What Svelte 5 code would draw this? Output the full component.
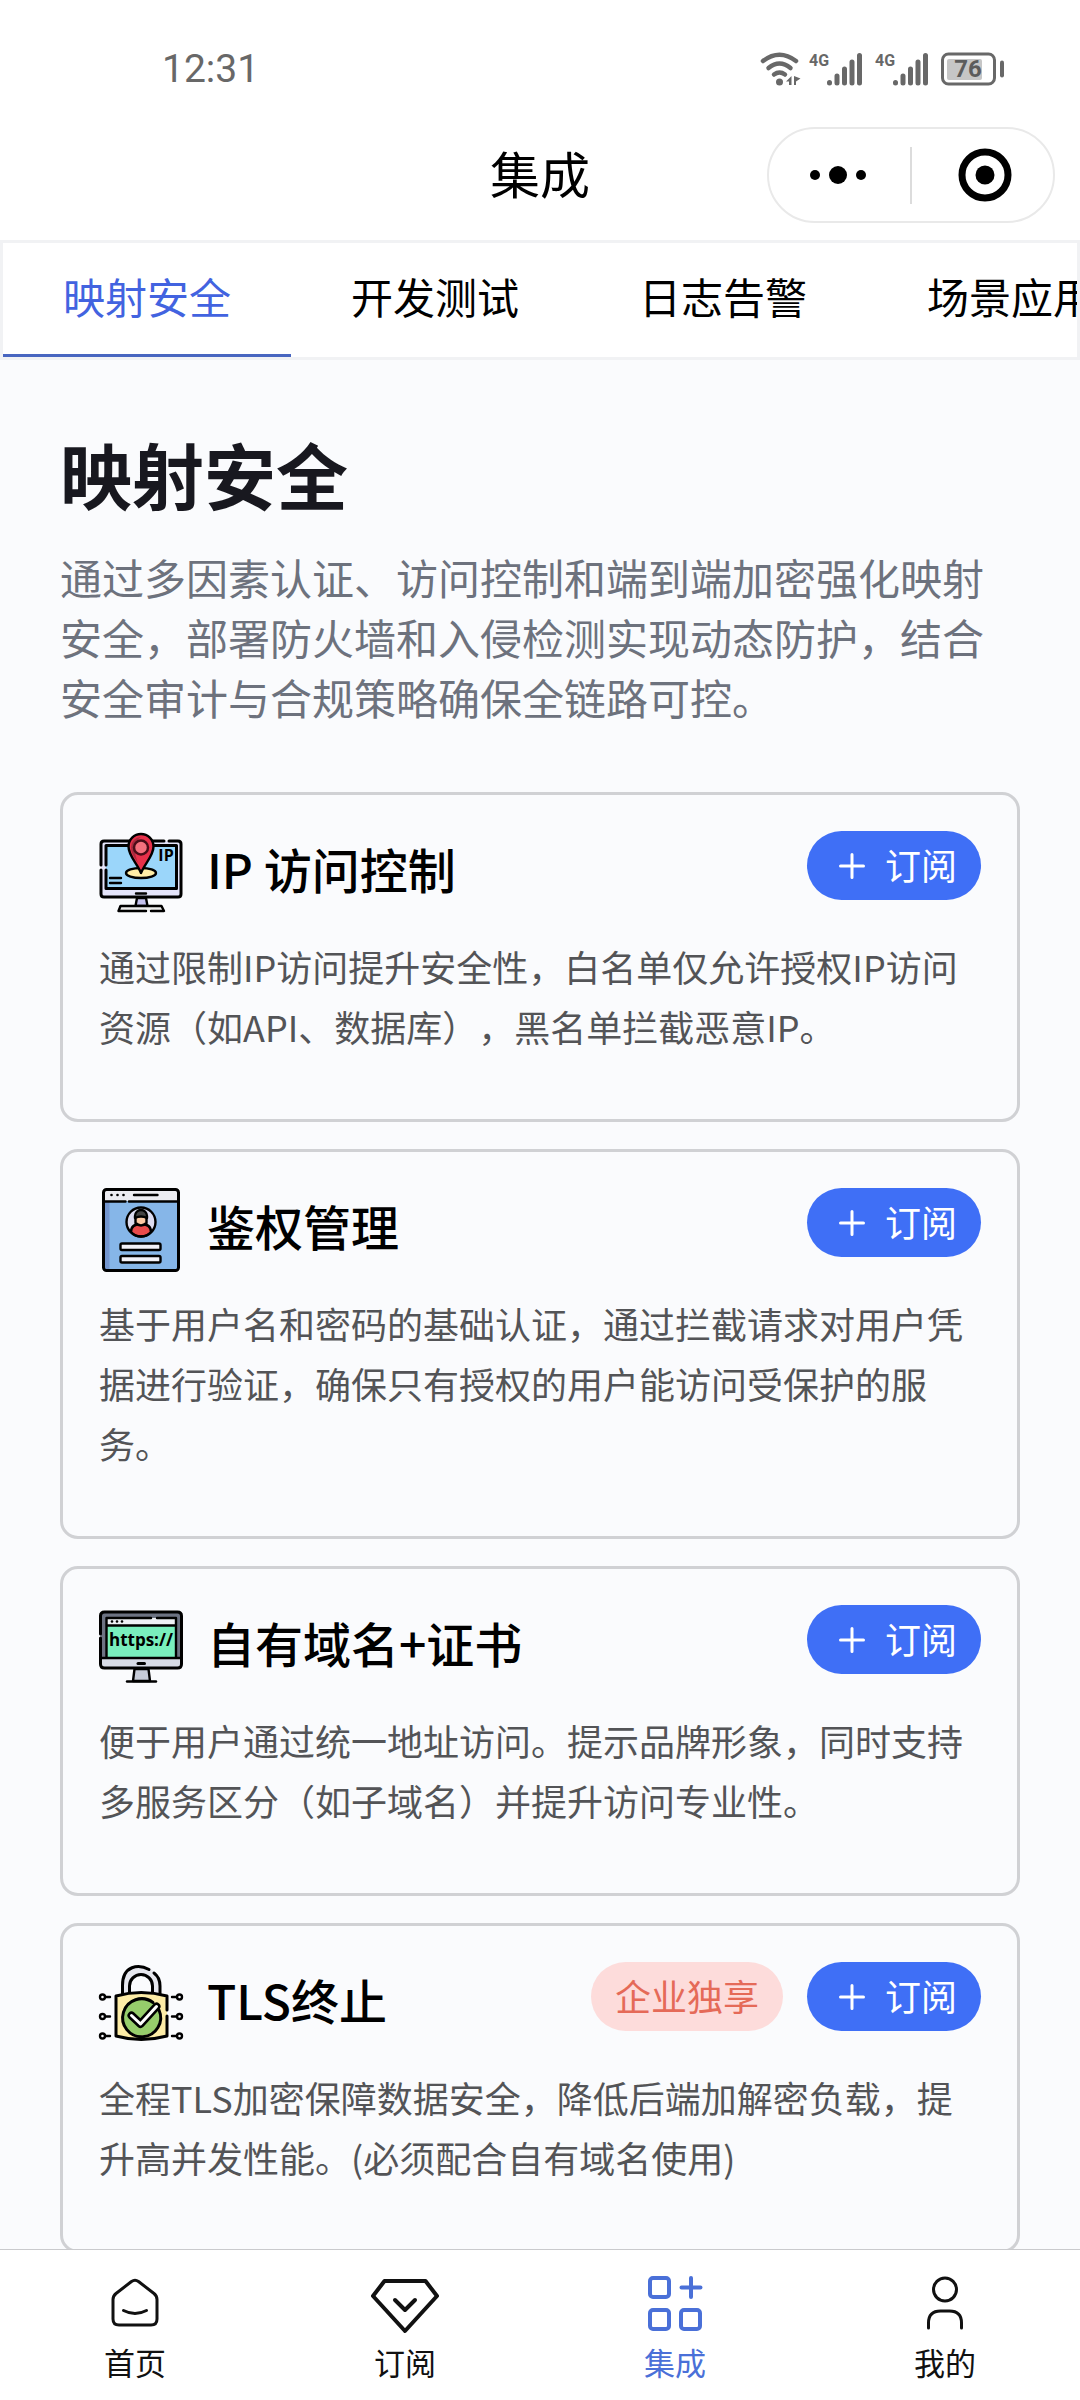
<script>
  let activeTab = $state('映射安全');
  let activePage = $state('集成');

  const tabs = ['映射安全', '开发测试', '日志告警', '场景应用'];
  const pages = ['首页', '订阅', '集成', '我的'];

  const cards = [
    {
      icon: 'ip',
      title: 'IP 访问控制',
      text: '通过限制IP访问提升安全性，白名单仅允许授权IP访问资源（如API、数据库），黑名单拦截恶意IP。'
    },
    {
      icon: 'auth',
      title: '鉴权管理',
      text: '基于用户名和密码的基础认证，通过拦截请求对用户凭据进行验证，确保只有授权的用户能访问受保护的服务。'
    },
    {
      icon: 'domain',
      title: '自有域名+证书',
      text: '便于用户通过统一地址访问。提示品牌形象，同时支持多服务区分（如子域名）并提升访问专业性。'
    },
    {
      icon: 'tls',
      title: 'TLS终止',
      badge: '企业独享',
      text: '全程TLS加密保障数据安全，降低后端加解密负载，提升高并发性能。(必须配合自有域名使用)'
    }
  ];
</script>

{#snippet signal()}
  <svg width="54" height="34" viewBox="0 0 54 34" aria-hidden="true">
    <text x="0" y="14" class="net">4G</text>
    <g stroke="#686868" stroke-width="5" stroke-linecap="round">
      <path d="M20.500 30.500v.5M28 24v7M35.500 17v14M43 10v21M50.500 3.500v27.500" />
    </g>
  </svg>
{/snippet}

<div class="page">
  <header>
    <div class="status">
      <span class="time">12:31</span>
      <div class="status-icons">
        <svg width="42" height="34" viewBox="0 0 42 34" aria-hidden="true">
          <g fill="none" stroke="#686868" stroke-width="4.500" stroke-linecap="round">
            <path d="M3 9Q19.500-3.500 36 9" />
            <path d="M8.500 16Q19.500 7 30.500 16" />
            <path d="M14 22.500Q19.500 18.500 25 22.500" />
          </g>
          <circle cx="19.500" cy="30" r="3.500" fill="#686868" />
          <path d="M31.500 24v9h-2.500v-3.500h-3zM34 24v9h2v-3.500l4.500-3z" fill="#686868" />
        </svg>
        {@render signal()}
        {@render signal()}
        <svg width="64" height="34" viewBox="0 0 64 34" aria-hidden="true">
          <rect x="1.500" y="2" width="52" height="30" rx="6" fill="none" stroke="#686868" stroke-width="3" />
          <rect x="6" y="7" width="35" height="21" rx="2" fill="#c6c6c6" />
          <path d="M61 10.500v13" stroke="#686868" stroke-width="4" stroke-linecap="round" />
          <text x="27" y="25" text-anchor="middle" class="level">76</text>
        </svg>
      </div>
    </div>
    <div class="nav">
      <h1>集成</h1>
      <div class="capsule">
        <button class="more" aria-label="更多">
          <svg width="54" height="20" viewBox="0 0 54 20">
            <circle cx="4" cy="10" r="5" />
            <circle cx="27" cy="10" r="9" />
            <circle cx="50" cy="10" r="5" />
          </svg>
        </button>
        <span class="divider"></span>
        <button class="close" aria-label="关闭">
          <svg width="54" height="54" viewBox="0 0 54 54">
            <circle cx="27" cy="27" r="23" fill="none" stroke="#000" stroke-width="7" />
            <circle cx="27" cy="27" r="9.500" />
          </svg>
        </button>
      </div>
    </div>
  </header>

  <nav class="tabs">
    {#each tabs as tab}
      <button class:active={tab === activeTab} onclick={() => (activeTab = tab)}>{tab}</button>
    {/each}
  </nav>

  <main>
    <h2>映射安全</h2>
    <p class="intro">
      通过多因素认证、访问控制和端到端加密强化映射安全，部署防火墙和入侵检测实现动态防护，结合安全审计与合规策略确保全链路可控。
    </p>

    <div class="cards">
      {#each cards as card}
        <article class="card">
          <div class="card-head">
            <svg class="card-icon" width="84" height="84" viewBox="0 0 84 84" aria-hidden="true">
              {#if card.icon === 'ip'}
                <rect x="2" y="10" width="80" height="56" rx="3" fill="#e4e4fa" />
                <path d="M70 10h9q3 0 3 3v50q0 3-3 3H5q-3 0-3-3V39M2 34V13q0-3 3-3h60" class="line" />
                <rect x="7" y="14.500" width="70.500" height="43" fill="#9bd6fa" />
                <path d="M7 39v18.500h70.500v-43H7V34" class="line" />
                <ellipse cx="42" cy="42" rx="15" ry="5" fill="#ffeda6" class="line thin" />
                <path d="M42 42C38 32 29.500 25 29.500 15.500a12.500 12.500 0 0 1 25 0C54.500 25 46 32 42 42z" fill="#e8304a" class="line thin" />
                <path d="M32 16a10 10 0 0 1 10-10c-7 4-8 14-3 26-4-6-7-10-7-16z" fill="#a82b3e" />
                <circle cx="42" cy="16.500" r="7" fill="#f4717e" stroke="#4a0d18" stroke-width="2.500" />
                <text x="67" y="30" text-anchor="middle" class="ip-text">IP</text>
                <path d="M11 47h11M11 52h11M37 62.500h10" class="line thin" />
                <path d="M38 67l-1.500 8h12L47 67z" fill="#c4c2ee" class="line thin" />
                <path d="M47 80H19.500l2-5h41l2.500 5H52" fill="#eee" class="line thin" />
              {:else if card.icon === 'auth'}
                <rect x="4.500" y="1.500" width="75" height="81" rx="3" fill="#86b6e8" />
                <path d="M6 14h4.500v67H6z" fill="#7496cf" />
                <path d="M4.500 13V4.500q0-3 3-3h69q3 0 3 3V13z" fill="#ececf1" />
                <rect x="4.500" y="1.500" width="75" height="81" rx="3" fill="none" class="line" />
                <path d="M5 13.500h21.500M30 13.500h49" class="line thin" />
                <path d="M35 7h23.500" class="line thin" />
                <circle cx="12.500" cy="7" r="1.300" />
                <circle cx="18.500" cy="7" r="1.300" />
                <circle cx="24.500" cy="7" r="1.300" />
                <circle cx="42" cy="34" r="14.500" fill="#dcdcf0" />
                <path d="M32 44c0-6 4-8 10-8s10 2 10 8c-5 6-15 6-20 0z" fill="#e94b4b" class="line thin" />
                <path d="M36.500 35v-6a5.500 5.500 0 0 1 11 0v6q-5.500 5-11 0z" fill="#fbc9a4" class="line thin" />
                <path d="M36 30v-2a6 6 0 0 1 12 0v2q-6-3-12 0z" fill="#444" class="line thin" />
                <circle cx="42" cy="34" r="14.500" fill="none" class="line thin" />
                <rect x="21.500" y="55.500" width="40" height="6.500" rx="1.500" fill="#f1f1f8" class="line thin" />
                <rect x="21.500" y="68" width="40" height="6.500" rx="1.500" fill="#f1f1f8" class="line thin" />
              {:else if card.icon === 'domain'}
                <rect x="1.500" y="7" width="81" height="56" rx="4" fill="#6c7282" />
                <path d="M2 53h80v7q0 3-3 3H5q-3 0-3-3z" fill="#d7dbe6" />
                <path d="M1.500 33V59q0 4 4 4h73q4 0 4-4V11q0-4-4-4h-73q-4 0-4 4v18" class="line" />
                <rect x="7.500" y="13" width="69.500" height="40" fill="#79efbd" />
                <path d="M7.500 13H77v7H7.500z" fill="#eef0f5" />
                <path d="M58 13H77v40H7.500V13H52M7.500 20.500H77M2 53h80" class="line thin" />
                <circle cx="13" cy="16.500" r="1.300" />
                <circle cx="18" cy="16.500" r="1.300" />
                <circle cx="23" cy="16.500" r="1.300" />
                <text x="42" y="41" text-anchor="middle" class="url-text">https://</text>
                <path d="M39 58.500h6.500" class="line" />
                <path d="M35.500 64l-1.500 12h17l-1.500-12z" fill="#c6cbd8" class="line thin" />
                <path d="M28 76.500h29" class="line thin" />
              {:else}
                <path d="M24 33V22a18 18 0 0 1 36 0v11h-7V23a11 11 0 0 0-22 0v10z" fill="#e6e7ee" />
                <path d="M23.500 32V23.500C23.500 3 40 2 50 7.500M55 11c4 3 6 8 6 13v8" class="line" />
                <path d="M30.500 31V24a11.500 11.500 0 0 1 23 0v7" class="line" />
                <path d="M17 34q25-7 51 0v40q-26 7-51 0z" fill="#fdeca6" />
                <path d="M68 48V34q-26-7-51 0v40q25 7 51 0V54" class="line" />
                <circle cx="42" cy="54.500" r="19" fill="#96cd6b" />
                <path d="M54 40.500A19 19 0 1 0 60 48" class="line" />
                <path d="M32.500 53.500l9 8.500 16-17.500" fill="none" stroke="#000" stroke-width="8" stroke-linecap="round" stroke-linejoin="round" />
                <path d="M32.500 53.500l9 8.500 16-17.500" fill="none" stroke="#fff" stroke-width="3" stroke-linecap="round" stroke-linejoin="round" />
                {#each [35, 54.5, 74] as y}
                  <circle cx="3.500" cy={y} r="2.500" class="line thin" />
                  <circle cx="80.500" cy={y} r="2.500" class="line thin" />
                  <path d="M6 {y}h5M73 {y}h5" class="line thin" />
                {/each}
              {/if}
            </svg>
            <h3>{card.title}</h3>
            {#if card.badge}
              <span class="badge">{card.badge}</span>
            {/if}
            <button class="subscribe">
              <svg width="42" height="42" viewBox="0 0 42 42" aria-hidden="true">
                <path d="M9.500 21h23M21 9.500v23" stroke="#fff" stroke-width="3" stroke-linecap="round" />
              </svg>
              <span>订阅</span>
            </button>
          </div>
          <p>{card.text}</p>
        </article>
      {/each}
    </div>
  </main>

  <nav class="tabbar">
    {#each pages as name}
      <button class:active={name === activePage} onclick={() => (activePage = name)}>
        <svg width="72" height="72" viewBox="0 0 72 72" fill="none" stroke="currentColor" stroke-linecap="round" stroke-linejoin="round" aria-hidden="true">
          {#if name === '首页'}
            <g stroke-width="3">
              <path d="M32.500 14.500q3.500-2.500 7 0L55 26.500q3 2.500 3 6V52q0 6-6 6H20q-6 0-6-6V32.500q0-3.500 3-6z" />
              <path d="M24.500 43.500q11.500 6 23 0" />
            </g>
          {:else if name === '订阅'}
            <g stroke-width="4">
              <path d="M15.500 14h41L68 29 36 64 4 29z" />
              <path d="M26 33l10 10 10-10" />
            </g>
          {:else if name === '集成'}
            <g stroke-width="4">
              <rect x="11" y="11" width="19" height="19" rx="3" />
              <rect x="11" y="43" width="19" height="19" rx="3" />
              <rect x="42" y="43" width="19" height="19" rx="3" />
              <path d="M42.500 20.500h19M52 11v19" />
            </g>
          {:else}
            <g stroke-width="3">
              <circle cx="36" cy="22.500" r="11.500" />
              <path d="M19.500 61v-5q0-12 12-12h9q12 0 12 12v5" />
            </g>
          {/if}
        </svg>
        {name}
      </button>
    {/each}
  </nav>
</div>

<style>
  :global(body) {
    margin: 0;
    background: #fff;
  }

  .page {
    display: flex;
    flex-direction: column;
    height: 100vh;
    overflow: hidden;
    color: #000;
    font-family: "Noto Sans CJK SC", sans-serif;
    text-spacing-trim: space-all;
  }

  button {
    margin: 0;
    padding: 0;
    border: 0;
    background: none;
    color: inherit;
    font-family: inherit;
    cursor: pointer;
  }

  svg {
    display: block;
    flex: none;
    overflow: visible;
  }

  .status {
    display: flex;
    justify-content: space-between;
    align-items: center;
    padding: 48px 75px 20px 162px;
    line-height: 42px;
  }

  .time {
    color: #686868;
    font-family: Roboto, sans-serif;
    font-size: 39px;
  }

  .status-icons {
    display: flex;
    align-items: center;
    gap: 12px;
  }

  .status-icons svg:first-child {
    margin-right: -5px;
  }

  .net {
    fill: #686868;
    font-family: Roboto, sans-serif;
    font-size: 16px;
    font-weight: 700;
  }

  .level {
    fill: #5c5c5c;
    font-family: Roboto, sans-serif;
    font-size: 24px;
    font-weight: 700;
  }

  .nav {
    display: grid;
    grid-template-columns: 1fr auto 1fr;
    align-items: center;
    height: 130px;
  }

  h1 {
    grid-column: 2;
    margin: 0;
    padding-bottom: 6px;
    font-size: 50px;
    font-weight: 400;
    line-height: 72px;
  }

  .capsule {
    justify-self: end;
    display: flex;
    align-items: center;
    box-sizing: border-box;
    width: 288px;
    height: 96px;
    margin-right: 25px;
    border: 2px solid #e9e9e9;
    border-radius: 48px;
  }

  .capsule button {
    flex: 1;
    display: flex;
    justify-content: center;
  }

  .capsule .more {
    padding-right: 4px;
  }

  .capsule .close {
    padding-left: 4px;
  }

  .divider {
    width: 2px;
    height: 57px;
    background: #dcdcdc;
  }

  .tabs {
    display: flex;
    flex: none;
    overflow: hidden;
    border: 3px solid #f1f2f4;
  }

  .tabs button {
    flex: none;
    box-sizing: border-box;
    width: 288px;
    height: 114px;
    padding-bottom: 6px;
    border-bottom: 3px solid transparent;
    font-size: 42px;
    line-height: 60px;
  }

  .tabs .active {
    border-color: #4866c0;
    color: #4263e0;
  }

  main {
    flex: 1;
    min-height: 0;
    overflow-y: auto;
    scrollbar-width: none;
    padding: 65px 60px 0;
    background: #fafbfd;
  }

  h2 {
    margin: 0 0 26px;
    color: #18181f;
    font-size: 72px;
    font-weight: 700;
    line-height: 96px;
  }

  .intro {
    margin: 0 0 65px;
    color: #6d727d;
    font-size: 42px;
    line-height: 60px;
  }

  .cards {
    display: flex;
    flex-direction: column;
    gap: 27px;
    padding-bottom: 27px;
  }

  .card {
    padding: 36px 36px 63px;
    border: 3px solid #d0d1d4;
    border-radius: 18px;
  }

  .card-head {
    display: flex;
    align-items: flex-start;
    gap: 24px;
    margin-bottom: 21px;
  }

  .line {
    fill: none;
    stroke: #000;
    stroke-width: 3;
    stroke-linecap: round;
    stroke-linejoin: round;
  }

  .thin {
    stroke-width: 2.4;
  }

  .line[fill] {
    fill: revert-layer;
  }

  .ip-text {
    font-family: "Open Sans", sans-serif;
    font-size: 16px;
    font-weight: 700;
  }

  .url-text {
    font-family: "Open Sans", sans-serif;
    font-size: 17px;
    font-weight: 700;
  }

  h3 {
    flex: 1;
    margin: 0;
    font-size: 48px;
    font-weight: 500;
    line-height: 75px;
  }

  .badge,
  .subscribe {
    box-sizing: border-box;
    height: 69px;
    border-radius: 35px;
    font-size: 36px;
    line-height: 66px;
  }

  .badge {
    padding: 0 24px;
    background: #fddcdb;
    color: #e56a58;
  }

  .subscribe {
    display: flex;
    gap: 12px;
    padding: 0 24px;
    background: #3f6ff6;
    color: #fff;
  }

  .subscribe svg {
    align-self: center;
  }

  .card p {
    margin: 0;
    color: #535457;
    font-size: 36px;
    line-height: 60px;
  }

  .tabbar {
    display: grid;
    grid-template-columns: repeat(4, 1fr);
    flex: none;
    border-top: 1px solid #c9cacd;
    padding: 17px 0 16px;
    background: #fff;
  }

  .tabbar button {
    display: flex;
    flex-direction: column;
    align-items: center;
    color: #111;
    font-size: 31px;
    line-height: 45px;
  }

  .tabbar .active {
    color: #4a70d8;
  }
</style>
